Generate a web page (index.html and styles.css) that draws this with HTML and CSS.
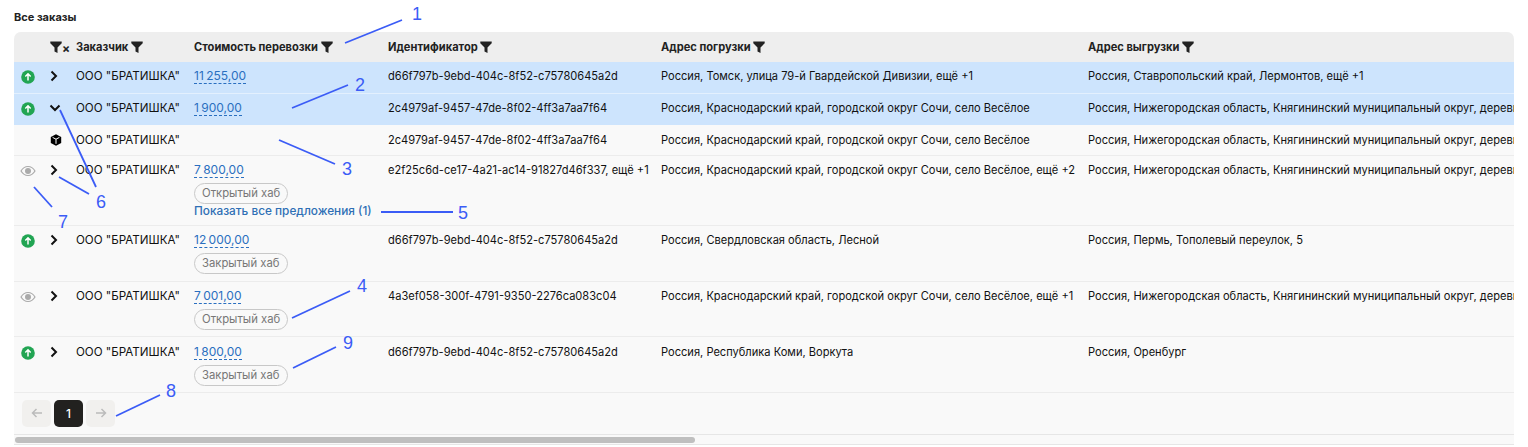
FILE: index.html
```html
<!DOCTYPE html>
<html lang="ru">
<head>
    <meta charset="UTF-8">
    <title>Все заказы</title>
    <link rel="stylesheet" href="styles.css">
</head>
<body>
    <svg class="defs" width="0" height="0">
        <symbol id="filter" viewBox="0 0 12 12"><path d="M.3.5h11.400v1.800L7.500 6.500V12L4.500 10.400V6.500L.3 2.300z"/></symbol>
        <symbol id="up" viewBox="0 0 14 14"><circle cx="7" cy="7" r="6.800" fill="#22a553"/><path d="M7 10.500V4M4.300 6.500 7 3.800l2.700 2.700" fill="none" stroke="#fff" stroke-width="1.500"/></symbol>
        <symbol id="eye" viewBox="0 0 16 12"><path d="M1 6c1.800-3 4-4.500 7-4.500S13.200 3 15 6c-1.800 3-4 4.500-7 4.500S2.800 9 1 6z" fill="none" stroke="#aaa" stroke-width="1.200"/><circle cx="8" cy="6" r="3" fill="#aaa"/></symbol>
        <symbol id="right" viewBox="0 0 10 12"><path d="M2.500 1.500 7 6l-4.500 4.500" fill="none" stroke="#111" stroke-width="2"/></symbol>
        <symbol id="down" viewBox="0 0 12 10"><path d="M1.500 2.500 6 7l4.500-4.500" fill="none" stroke="#111" stroke-width="2"/></symbol>
        <symbol id="box" viewBox="0 0 12 12"><path d="M6 .3 11.200 3v6L6 11.700.8 9V3z"/><path d="M2.600 3.400 6 5.200l3.400-1.800M6 5.200v4.600" fill="none" stroke="#fff" stroke-width="1"/></symbol>
        <symbol id="arrow-left" viewBox="0 0 12 12"><path d="M11 6H1.500M5.500 2 1.500 6l4 4" fill="none" stroke="#bbb" stroke-width="1.500"/></symbol>
        <symbol id="arrow-right" viewBox="0 0 12 12"><path d="M1 6h9.500M6.500 2l4 4-4 4" fill="none" stroke="#bbb" stroke-width="1.500"/></symbol>
    </svg>

    <h1 class="title">Все заказы</h1>

    <div class="table-wrap">
        <table class="orders">
            <colgroup>
                <col class="col-status"><col class="col-expand"><col class="col-customer"><col class="col-cost"><col class="col-id"><col class="col-load"><col class="col-unload">
            </colgroup>
            <thead>
                <tr>
                    <th></th>
                    <th><span class="clear-filter"><svg class="icon-filter"><use href="#filter"/></svg><span class="clear-x">×</span></span></th>
                    <th>Заказчик <svg class="icon-filter"><use href="#filter"/></svg></th>
                    <th>Стоимость перевозки <svg class="icon-filter"><use href="#filter"/></svg></th>
                    <th>Идентификатор <svg class="icon-filter"><use href="#filter"/></svg></th>
                    <th>Адрес погрузки <svg class="icon-filter"><use href="#filter"/></svg></th>
                    <th>Адрес выгрузки <svg class="icon-filter"><use href="#filter"/></svg></th>
                </tr>
            </thead>
            <tbody>
                <tr class="selected row-a">
                    <td><svg class="icon-status"><use href="#up"/></svg></td>
                    <td><svg class="icon-right"><use href="#right"/></svg></td>
                    <td class="customer">ООО "БРАТИШКА"</td>
                    <td><a class="price">11 255,00</a></td>
                    <td>d66f797b-9ebd-404c-8f52-c75780645a2d</td>
                    <td>Россия, Томск, улица 79-й Гвардейской Дивизии, ещё +1</td>
                    <td>Россия, Ставропольский край, Лермонтов, ещё +1</td>
                </tr>
                <tr class="selected row-b">
                    <td><svg class="icon-status"><use href="#up"/></svg></td>
                    <td><svg class="icon-down"><use href="#down"/></svg></td>
                    <td class="customer">ООО "БРАТИШКА"</td>
                    <td><a class="price">1 900,00</a></td>
                    <td>2c4979af-9457-47de-8f02-4ff3a7aa7f64</td>
                    <td>Россия, Краснодарский край, городской округ Сочи, село Весёлое</td>
                    <td>Россия, Нижегородская область, Княгининский муниципальный округ, деревня Покровка</td>
                </tr>
                <tr class="row-c">
                    <td></td>
                    <td><svg class="icon-box"><use href="#box"/></svg></td>
                    <td class="customer">ООО "БРАТИШКА"</td>
                    <td></td>
                    <td>2c4979af-9457-47de-8f02-4ff3a7aa7f64</td>
                    <td>Россия, Краснодарский край, городской округ Сочи, село Весёлое</td>
                    <td>Россия, Нижегородская область, Княгининский муниципальный округ, деревня Покровка</td>
                </tr>
                <tr class="row-d">
                    <td><svg class="icon-eye"><use href="#eye"/></svg></td>
                    <td><svg class="icon-right"><use href="#right"/></svg></td>
                    <td class="customer">ООО "БРАТИШКА"</td>
                    <td>
                        <a class="price">7 800,00</a>
                        <span class="chip">Открытый хаб</span>
                        <a class="show-all">Показать все предложения (1)</a>
                    </td>
                    <td>e2f25c6d-ce17-4a21-ac14-91827d46f337, ещё +1</td>
                    <td>Россия, Краснодарский край, городской округ Сочи, село Весёлое, ещё +2</td>
                    <td>Россия, Нижегородская область, Княгининский муниципальный округ, деревня Покровка</td>
                </tr>
                <tr class="row-e">
                    <td><svg class="icon-status"><use href="#up"/></svg></td>
                    <td><svg class="icon-right"><use href="#right"/></svg></td>
                    <td class="customer">ООО "БРАТИШКА"</td>
                    <td>
                        <a class="price">12 000,00</a>
                        <span class="chip">Закрытый хаб</span>
                    </td>
                    <td>d66f797b-9ebd-404c-8f52-c75780645a2d</td>
                    <td>Россия, Свердловская область, Лесной</td>
                    <td>Россия, Пермь, Тополевый переулок, 5</td>
                </tr>
                <tr class="row-f">
                    <td><svg class="icon-eye"><use href="#eye"/></svg></td>
                    <td><svg class="icon-right"><use href="#right"/></svg></td>
                    <td class="customer">ООО "БРАТИШКА"</td>
                    <td>
                        <a class="price">7 001,00</a>
                        <span class="chip">Открытый хаб</span>
                    </td>
                    <td>4a3ef058-300f-4791-9350-2276ca083c04</td>
                    <td>Россия, Краснодарский край, городской округ Сочи, село Весёлое, ещё +1</td>
                    <td>Россия, Нижегородская область, Княгининский муниципальный округ, деревня Покровка</td>
                </tr>
                <tr class="row-g">
                    <td><svg class="icon-status"><use href="#up"/></svg></td>
                    <td><svg class="icon-right"><use href="#right"/></svg></td>
                    <td class="customer">ООО "БРАТИШКА"</td>
                    <td>
                        <a class="price">1 800,00</a>
                        <span class="chip">Закрытый хаб</span>
                    </td>
                    <td>d66f797b-9ebd-404c-8f52-c75780645a2d</td>
                    <td>Россия, Республика Коми, Воркута</td>
                    <td>Россия, Оренбург</td>
                </tr>
            </tbody>
        </table>

        <div class="pager">
            <span class="page-btn"><svg class="icon-arrow"><use href="#arrow-left"/></svg></span>
            <span class="page-btn current">1</span>
            <span class="page-btn"><svg class="icon-arrow"><use href="#arrow-right"/></svg></span>
        </div>

        <div class="scrollbar"><div class="scroll-thumb"></div></div>
    </div>

    <!-- annotations drawn over the screenshot -->
    <svg class="notes" width="1528" height="447">
        <g class="note-lines">
            <line x1="345" y1="43" x2="402" y2="20"/>
            <line x1="292" y1="108" x2="348" y2="85"/>
            <line x1="279" y1="140" x2="335" y2="164"/>
            <line x1="292" y1="318" x2="350" y2="291"/>
            <line x1="381" y1="212" x2="453" y2="212"/>
            <line x1="60" y1="110" x2="96" y2="187"/>
            <line x1="59" y1="177" x2="89" y2="194"/>
            <line x1="34" y1="187" x2="52" y2="207"/>
            <line x1="116" y1="416" x2="160" y2="395"/>
            <line x1="293" y1="368" x2="336" y2="347"/>
        </g>
        <g class="note-nums">
            <text x="417" y="20">1</text>
            <text x="360" y="91">2</text>
            <text x="347" y="175">3</text>
            <text x="362" y="292">4</text>
            <text x="463" y="219">5</text>
            <text x="101" y="208">6</text>
            <text x="63" y="228">7</text>
            <text x="171" y="397">8</text>
            <text x="348" y="349">9</text>
        </g>
    </svg>
</body>
</html>
```

FILE: styles.css
```css
html, body {
    margin: 0;
    height: 447px;
    overflow: hidden;
    background: white;
    font-family: Inter, "Liberation Sans", sans-serif;
    font-size: 11.1px;
    color: #111;
}
body {
    position: relative;
    padding: 0 14px;
    box-sizing: border-box;
}
.defs {
    position: absolute;
}
.title {
    margin: 0;
    height: 32px;
    padding-top: 11px;
    box-sizing: border-box;
    font-size: 11px;
    line-height: 13px;
    font-weight: 700;
    color: #222;
}
.table-wrap {
    width: 1500px;
    overflow: hidden;
    border-radius: 7px 7px 0 0;
    background: #f9f9f9;
}
.orders {
    table-layout: fixed;
    width: 2100px;
    border-collapse: separate;
    border-spacing: 0;
}
.col-status { width: 32px; }
.col-expand { width: 30px; }
.col-customer { width: 118px; }
.col-cost { width: 194px; }
.col-id { width: 273px; }
.col-load { width: 427px; }
.col-unload { width: 1026px; }
.orders th {
    height: 30px;
    padding: 0;
    background: #eeeeee;
    text-align: left;
    font-weight: 700;
    font-size: 11.1px;
    color: #222;
}
.orders td {
    box-sizing: border-box;
    padding: 7px 0 0;
    vertical-align: top;
    line-height: 15px;
    white-space: nowrap;
    overflow: hidden;
    border-bottom: 1px solid #ececec;
}
.orders td.customer {
    font-size: 11.6px;
}
.row-a td { height: 32px; }
.row-b td { height: 31px; }
.row-c td { height: 31px; padding-top: 8px; }
.row-d td { height: 70px; }
.row-e td { height: 56px; }
.row-f td { height: 55px; }
.row-g td { height: 56px; padding-top: 8px; }
.selected td {
    background: #cde4fd;
    border-bottom-color: #e3f0fe;
}
.row-b td {
    border-bottom-color: #cde4fd;
}
.icon-filter {
    width: 12px;
    height: 12px;
    vertical-align: -2px;
    fill: #222;
}
.clear-filter {
    display: flex;
    align-items: center;
    margin-left: 4px;
}
.clear-x {
    font-size: 12px;
    line-height: 10px;
    margin-top: 3px;
}
.icon-status {
    display: block;
    width: 14px;
    height: 14px;
    margin: 1px 0 0 7px;
}
.icon-eye {
    display: block;
    width: 16px;
    height: 12px;
    margin: 2px 0 0 6px;
}
.icon-right {
    display: block;
    width: 10px;
    height: 12px;
    margin: 1px 0 0 3px;
}
.icon-down {
    display: block;
    width: 12px;
    height: 10px;
    margin: 2px 0 0 3px;
}
.icon-box {
    display: block;
    width: 12px;
    height: 12px;
    margin: 1px 0 0 4px;
}
.icon-arrow {
    display: block;
    width: 12px;
    height: 12px;
    margin: 7px auto 0;
}
.price {
    display: table;
    font-size: 12px;
    color: #2a6fc0;
    line-height: 14px;
    word-spacing: -1px;
    border-bottom: 1px dashed #2a6fc0;
}
.chip {
    display: table;
    box-sizing: border-box;
    height: 21px;
    font-size: 11.300px;
    line-height: 19px;
    margin-top: 5px;
    padding: 0 7px;
    border: 1px solid #c8c8c8;
    border-radius: 11px;
    color: #777;
}
.show-all {
    display: block;
    font-size: 11.800px;
    color: #2e6fb5;
    font-weight: 500;
    line-height: 14px;
}
.pager {
    display: flex;
    gap: 3px;
    height: 42px;
    padding: 7px 0 0 8px;
    box-sizing: border-box;
    border-bottom: 1px solid #e6e6e6;
}
.page-btn {
    width: 29px;
    height: 27px;
    border-radius: 5px;
    background: #f1f0ee;
    text-align: center;
}
.page-btn.current {
    background: #22211f;
    color: white;
    font-size: 12px;
    font-weight: 500;
    line-height: 27px;
}
.scrollbar {
    height: 10px;
    padding: 2px 0 0 1px;
    box-sizing: border-box;
    border-bottom: 1px solid #e6e6e6;
}
.scroll-thumb {
    width: 680px;
    height: 6px;
    border-radius: 3px;
    background: #bfbfbf;
}
.notes {
    position: absolute;
    left: 0;
    top: 0;
    pointer-events: none;
}
.note-lines line {
    stroke: #3b5cf6;
    stroke-width: 1.800;
}
.note-nums text {
    fill: #3b5cf6;
    font-family: "Liberation Sans", sans-serif;
    font-size: 18px;
    text-anchor: middle;
}
```
